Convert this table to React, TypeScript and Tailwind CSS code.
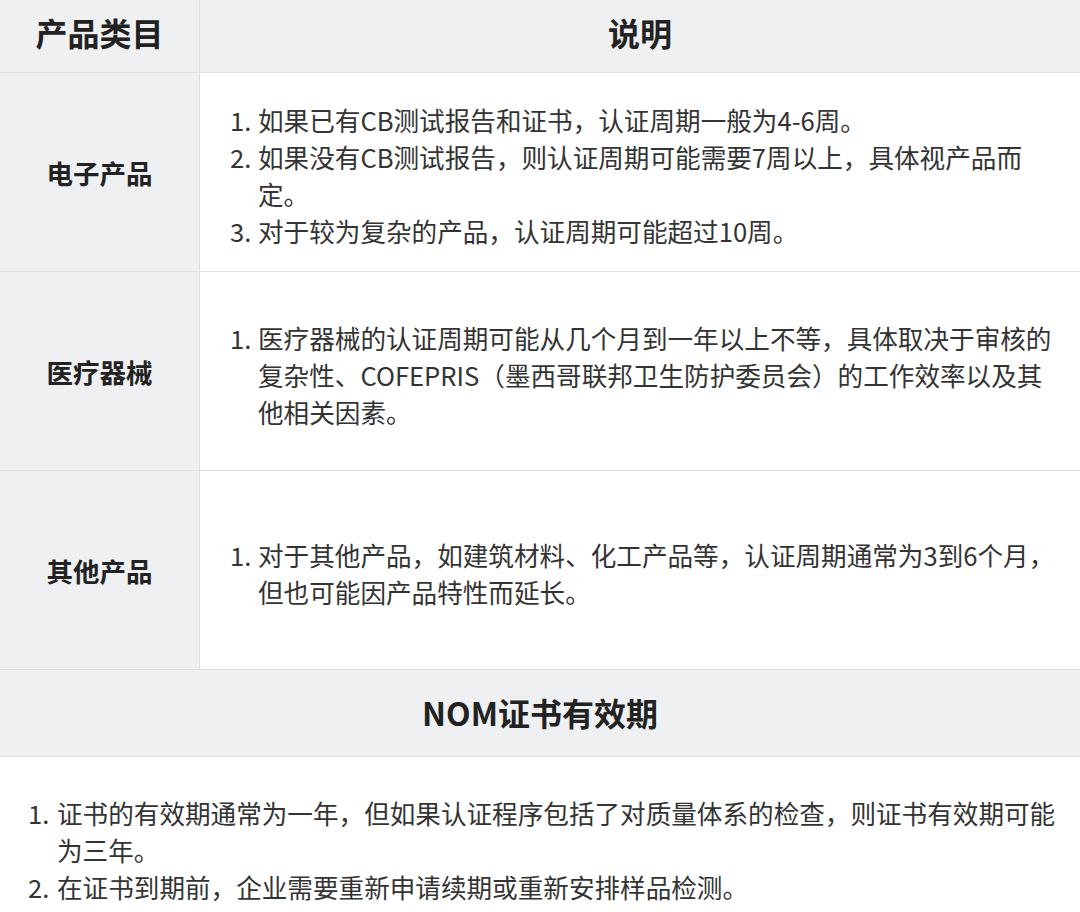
const rows = [
  {
    label: "电子产品",
    items: [
      "如果已有CB测试报告和证书，认证周期一般为4-6周。",
      "如果没有CB测试报告，则认证周期可能需要7周以上，具体视产品而定。",
      "对于较为复杂的产品，认证周期可能超过10周。",
    ],
  },
  {
    label: "医疗器械",
    items: [
      "医疗器械的认证周期可能从几个月到一年以上不等，具体取决于审核的复杂性、COFEPRIS（墨西哥联邦卫生防护委员会）的工作效率以及其他相关因素。",
    ],
  },
  {
    label: "其他产品",
    items: [
      "对于其他产品，如建筑材料、化工产品等，认证周期通常为3到6个月，但也可能因产品特性而延长。",
    ],
  },
];

const validity = [
  "证书的有效期通常为一年，但如果认证程序包括了对质量体系的检查，则证书有效期可能为三年。",
  "在证书到期前，企业需要重新申请续期或重新安排样品检测。",
];

function NumberedList({ items, markerWidth }: { items: string[]; markerWidth: string }) {
  return (
    <ol className="flex flex-col">
      {items.map((text, i) => (
        <li key={i} className="flex">
          <span className={`${markerWidth} shrink-0`}>{i + 1}.</span>
          <span className="min-w-0 flex-1">{text}</span>
        </li>
      ))}
    </ol>
  );
}

export default function App() {
  return (
    <div
      className="min-h-screen w-[1080px] bg-white text-[#333333]"
      style={{ fontFamily: '"Noto Sans CJK SC", "Noto Sans", sans-serif' }}
    >
      <div className="grid grid-cols-[200px_1fr]">
        {/* header */}
        <div className="flex h-[73px] items-center justify-center border-b border-r border-[#dedfe2] bg-[#eff0f2] pb-[8px] text-[32px] font-bold text-[#222222]">
          产品类目
        </div>
        <div className="flex h-[73px] items-center justify-center border-b border-[#dedfe2] bg-[#eff0f2] pb-[8px] text-[32px] font-bold text-[#222222]">
          说明
        </div>

        {rows.map((row) => (
          <div key={row.label} className="contents">
            <div className="flex h-[199px] items-center justify-center border-b border-r border-[#dedfe2] bg-[#eff0f2] pt-[2px] text-[26.5px] font-bold text-[#222222]">
              {row.label}
            </div>
            <div className="flex h-[199px] items-center border-b border-[#dedfe2] pl-[30px] pr-[20px] pt-[6px] text-[25.6px] leading-[37px]">
              <NumberedList items={row.items} markerWidth="w-[28px]" />
            </div>
          </div>
        ))}
      </div>

      <div className="flex h-[87px] items-center justify-center border-b border-[#dedfe2] bg-[#eff0f2] pb-[2px] text-[32px] font-bold text-[#222222]">
        NOM证书有效期
      </div>

      <div className="pl-[28px] pr-[20px] pt-[37px] text-[25.6px] leading-[37px]">
        <NumberedList items={validity} markerWidth="w-[29px]" />
      </div>
    </div>
  );
}
